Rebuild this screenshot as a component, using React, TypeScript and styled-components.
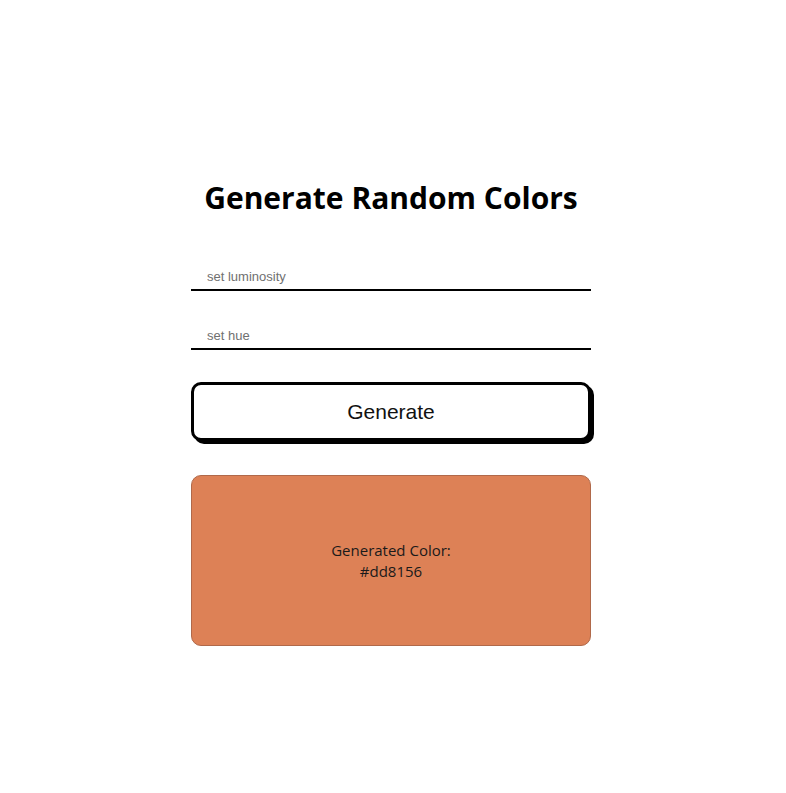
import React from "react";
import styled, { createGlobalStyle } from "styled-components";

const Global = createGlobalStyle`
  html, body { margin: 0; padding: 0; background: #fff; }
  body { font-family: "Open Sans", "Noto Sans", sans-serif; }
`;

const Page = styled.div`
  display: flex;
  justify-content: center;
  padding: 176px 4px 0 0;
`;

const Panel = styled.div`
  width: 400px;
  display: flex;
  flex-direction: column;
`;

const Title = styled.h1`
  margin: 0 0 36px;
  text-align: center;
  font-family: "Open Sans", "Noto Sans", sans-serif;
  font-weight: 700;
  font-size: 30px;
  line-height: 44px;
  color: #000;
`;

const Field = styled.input`
  display: block;
  width: 100%;
  box-sizing: border-box;
  height: 35px;
  padding: 8px 16px 0;
  border: none;
  border-bottom: 2px solid #000;
  outline: none;
  background: transparent;
  font-family: "Liberation Sans", Arial, sans-serif;
  font-size: 13px;
  margin-bottom: 24px;
  &::placeholder { color: #707070; }
`;

const Button = styled.button`
  display: block;
  width: 100%;
  height: 59px;
  margin-top: 8px;
  box-sizing: border-box;
  border: 3px solid #000;
  border-radius: 10px;
  background: #fff;
  box-shadow: 3px 3px 0 #000;
  font-family: "Liberation Sans", Arial, sans-serif;
  font-size: 21px;
  color: #111;
  cursor: pointer;
`;

const Swatch = styled.div<{ $color: string }>`
  margin-top: 34px;
  height: 171px;
  box-sizing: border-box;
  border: 1px solid #b0694a;
  border-radius: 10px;
  background: ${(p) => p.$color};
  display: flex;
  flex-direction: column;
  align-items: center;
  justify-content: center;
  font-family: "Open Sans", "Noto Sans", sans-serif;
  font-size: 15px;
  line-height: 21px;
  color: #1a1a1a;
`;

export default function App() {
  const color = "#dd8156";
  return (
    <>
      <Global />
      <Page>
        <Panel>
          <Title>Generate Random Colors</Title>
          <Field placeholder="set luminosity" />
          <Field placeholder="set hue" />
          <Button>Generate</Button>
          <Swatch $color={color}>
            <span>Generated Color:</span>
            <span>{color}</span>
          </Swatch>
        </Panel>
      </Page>
    </>
  );
}
